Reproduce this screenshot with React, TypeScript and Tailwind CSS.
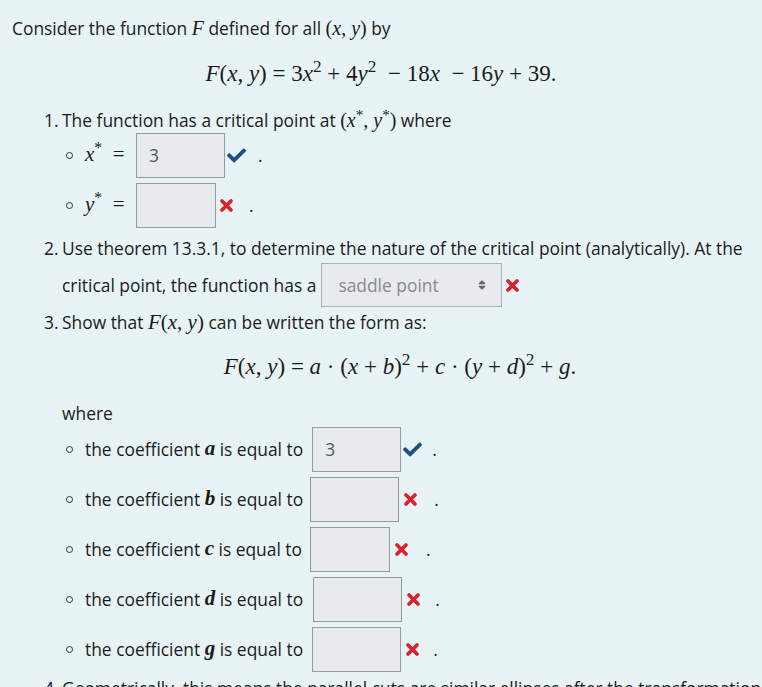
import { FaCheck, FaSort } from "react-icons/fa";

const M = "font-['Liberation_Serif',serif]";

function V({ children }: { children: React.ReactNode }) {
  return <span className={`${M} italic text-[20px]`}>{children}</span>;
}

function Box({ w, value }: { w: string; value?: string }) {
  return (
    <div className={`${w} h-[45px] bg-[#e8ebee] border border-[#999] flex items-center px-[12px] text-[#555]`}>
      {value}
    </div>
  );
}

function Ok() {
  return <FaCheck className="text-[#1a4f8b] w-[19px] h-[19px] ml-[2px]" />;
}

function Bad({ cls = "ml-[3px]" }: { cls?: string }) {
  return (
    <svg viewBox="0 0 16 16" className={`w-[15px] h-[15px] ${cls}`}>
      <path d="M3.2 3.2 L12.8 12.8 M12.8 3.2 L3.2 12.8" stroke="#d8232f" strokeWidth="4" strokeLinecap="round" fill="none" />
    </svg>
  );
}

function Dot() {
  return <span className="w-[7px] h-[7px] rounded-full border border-[#333] inline-block mr-[12px] ml-[4px] shrink-0" />;
}

function CoefRow({ v, w, good, value, gap, ml }: { v: string; w: string; good?: boolean; value?: string; gap: string; ml: string }) {
  return (
    <li className="h-[50px] flex items-center whitespace-nowrap">
      <Dot />
      <span>the coefficient&nbsp;</span>
      <span className={`${M} italic font-bold text-[21px]`}>{v}</span>
      <span>&nbsp;is equal to</span>
      <div className={ml}><Box w={w} value={value} /></div>
      {good ? <Ok /> : <Bad cls="ml-[4px]" />}
      <span className={gap}>.</span>
    </li>
  );
}

export default function App() {
  return (
    <div className="min-h-screen bg-[#e8f3f6] text-[#1b1b1b] font-['Open_Sans',sans-serif] text-[17.4px] px-3 pt-4 overflow-hidden">
      <p className="h-[24px] leading-[24px] whitespace-nowrap">
        Consider the function <V>F</V> defined for all <span className={`${M} text-[20px]`}>(<i>x</i>, <i>y</i>)</span> by
      </p>
      <div className={`h-[68px] flex items-center justify-center ${M} text-[23px] whitespace-nowrap`}>
        <span>
          <i>F</i>(<i>x</i>, <i>y</i>) = 3<i>x</i><sup>2</sup> + 4<i>y</i><sup>2</sup> &nbsp;− 18<i>x</i> &nbsp;− 16<i>y</i> + 39.
        </span>
      </div>

      <div className="pl-[50px]">
        <p className="h-[24px] leading-[24px] whitespace-nowrap">
          <span className="inline-block w-[18px] -ml-[18px]">1.</span>The function has a critical point at{" "}
          <span className={`${M} text-[20px]`}>(<i>x</i><sup>*</sup>, <i>y</i><sup>*</sup>)</span> where
        </p>
        <ul>
          <li className="h-[46px] flex items-center">
            <Dot />
            <span className={`${M} text-[21px] w-[51px]`}><i>x</i><sup>*</sup> &nbsp;=</span>
            <Box w="w-[89px]" value="3" />
            <Ok />
            <span className="ml-[12px]">.</span>
          </li>
          <li className="mt-[4px] h-[46px] flex items-center">
            <Dot />
            <span className={`${M} text-[21px] w-[51px]`}><i>y</i><sup>*</sup> &nbsp;=</span>
            <Box w="w-[80px]" />
            <Bad />
            <span className="ml-[15px]">.</span>
          </li>
        </ul>

        <p className="mt-[8px] h-[24px] leading-[24px] whitespace-nowrap">
          <span className="inline-block w-[18px] -ml-[18px]">2.</span>Use theorem 13.3.1, to determine the nature of the critical point (analytically). At the
        </p>
        <div className="h-[50px] flex items-center whitespace-nowrap">
          <span>critical point, the function has a</span>
          <div className="ml-[5px] w-[181px] h-[44px] bg-[#e8ebee] border border-[#aab0b5] flex items-center justify-between pl-[16px] pr-[14px] text-[#8a8a8a]">
            <span>saddle point</span>
            <FaSort className="w-[10px] h-[12px] text-[#666]" />
          </div>
          <Bad />
        </div>

        <p className="h-[24px] leading-[24px] whitespace-nowrap">
          <span className="inline-block w-[18px] -ml-[18px]">3.</span>Show that{" "}
          <span className={`${M} text-[21px]`}><i>F</i>(<i>x</i>, <i>y</i>)</span> can be written the form as:
        </p>
        <div className={`h-[66px] flex items-center justify-center ${M} text-[23px] pr-[12px] whitespace-nowrap`}>
          <span>
            <i>F</i>(<i>x</i>, <i>y</i>) = <i>a</i> · (<i>x</i> + <i>b</i>)<sup>2</sup> + <i>c</i> · (<i>y</i> + <i>d</i>)<sup>2</sup> + <i>g</i>.
          </span>
        </div>

        <p className="h-[26px] leading-[26px]">where</p>
        <ul className="-mt-[2px]">
          <CoefRow v="a" w="w-[89px]" good value="3" gap="ml-[10px]" ml="ml-[9px]" />
          <CoefRow v="b" w="w-[89px]" gap="ml-[16px]" ml="ml-[7px]" />
          <CoefRow v="c" w="w-[80px]" gap="ml-[17px]" ml="ml-[8px]" />
          <CoefRow v="d" w="w-[89px]" gap="ml-[14px]" ml="ml-[10px]" />
          <CoefRow v="g" w="w-[89px]" gap="ml-[13px]" ml="ml-[9px]" />
        </ul>
        <p className="h-[24px] leading-[24px] mt-[2px] whitespace-nowrap">
          <span className="inline-block w-[18px] -ml-[18px]">4.</span>Geometrically, this means the parallel cuts are similar ellipses after the transformation.
        </p>
      </div>
    </div>
  );
}
